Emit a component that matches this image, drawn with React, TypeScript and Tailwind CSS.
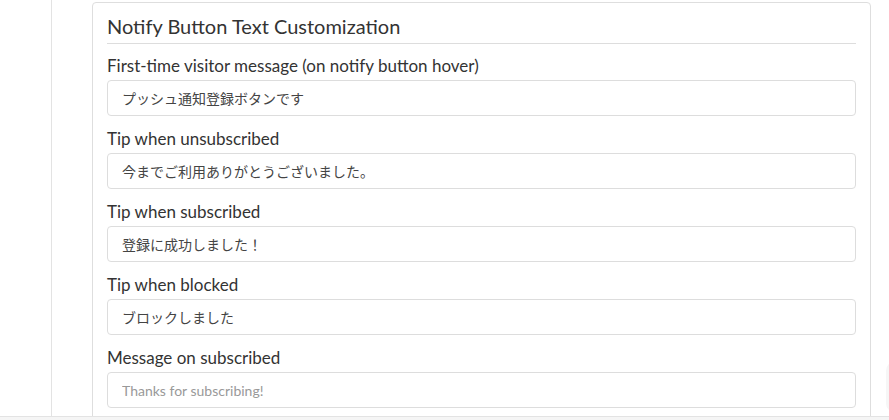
import React from "react";

const fields: { label: string; value?: string; placeholder?: string }[] = [
  { label: "First-time visitor message (on notify button hover)", value: "プッシュ通知登録ボタンです" },
  { label: "Tip when unsubscribed", value: "今までご利用ありがとうございました。" },
  { label: "Tip when subscribed", value: "登録に成功しました！" },
  { label: "Tip when blocked", value: "ブロックしました" },
  { label: "Message on subscribed", placeholder: "Thanks for subscribing!" },
];

export default function App() {
  return (
    <div
      className="relative flex h-[420px] w-full flex-col overflow-hidden bg-white"
      style={{ fontFamily: 'Lato, "Noto Sans CJK JP", sans-serif' }}
    >
      <div className="flex h-[416px] shrink-0 overflow-hidden">
        <div className="h-full w-[52px] shrink-0 border-r border-[#e3e3e3]" />
        <div className="ml-[40px] mt-[2px] h-[460px] w-[779px] shrink-0 rounded-[4px] border border-[#dedede] px-[14px] pt-[9px]">
          <h2 className="border-b border-[#dddddd] pb-[3px] text-[20px] font-normal leading-[28px] text-[#333]">
            Notify Button Text Customization
          </h2>
          <div className="pt-[11px]">
            {fields.map((f) => (
              <div key={f.label} className="mb-[12px]">
                <label className="mb-[3px] block text-[17px] leading-[22px] text-[#333]">{f.label}</label>
                <input
                  readOnly
                  defaultValue={f.value}
                  placeholder={f.placeholder}
                  className="block h-[36px] w-full rounded-[4px] border border-[#dddddd] bg-white px-[14px] text-[14px] text-[#444] outline-none placeholder:text-[14px] placeholder:text-[#999]"
                  style={{ fontFamily: 'Lato, "Noto Sans CJK JP", sans-serif' }}
                />
              </div>
            ))}
          </div>
        </div>
      </div>
      <div className="flex-1 border-t border-[#e3e3e3] bg-[#f5f5f5]" />
      <div className="absolute right-[-14px] top-[362px] h-[50px] w-[17px] rounded-full bg-[#f6f6f6]" />
    </div>
  );
}
